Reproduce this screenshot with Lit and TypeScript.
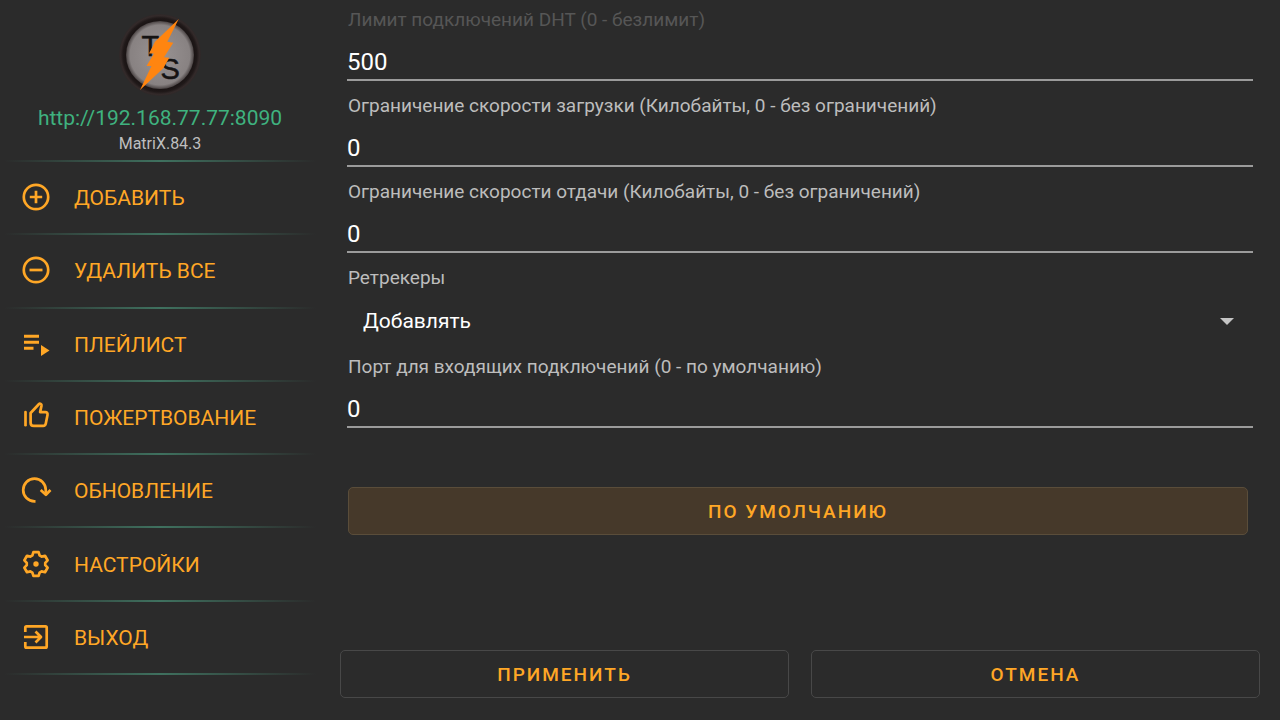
import { LitElement, html, css, svg } from "lit";
import { customElement } from "lit/decorators.js";

const icons = {
  add: svg`<circle cx="14" cy="14" r="12.2"/><path d="M14 7.800v12.400M7.800 14h12.400"/>`,
  remove: svg`<circle cx="14" cy="14" r="12.2"/><path d="M7.500 14h13"/>`,
  playlist: svg`<path class="thick" d="M2 6.200h15M2 12.200h15M2 18.200h9.500"/><path class="solid" d="M19 15v11l8.500-5.500z"/>`,
  like: svg`<path d="M3.500 9v13.200" stroke-linecap="round"/><path d="M8.600 10l8.200-8.700c1.200-1.200 3-.2 2.700 1.400l-1.400 6.400h5.200c1.700 0 2.500 1.200 2.200 2.800l-1.700 8.700c-.3 1.500-1.200 2.300-2.600 2.300h-9.400c-2.100 0-3.200-1.200-3.200-3.200z"/>`,
  refresh: svg`<path d="M13.500 25.300h-1A11.300 11.300 0 1 1 23.800 14v4"/><path d="M18.700 14l5.200 4.800 4.600-4.800"/>`,
  settings: svg`<path d="M10.400 5.400l1-3.300h5.200l1 3.300 2.050 1.180 3.360-.78 2.600 4.500-2.360 2.520v2.360l2.360 2.520-2.600 4.500-3.360-.78-2.050 1.180-1 3.300h-5.200l-1-3.300-2.050-1.180-3.360.78-2.600-4.500 2.360-2.520v-2.360L2.390 10.300l2.600-4.500 3.360.78z"/><circle class="solid" cx="14" cy="14" r="2.700"/>`,
  exit: svg`<path d="M3.300 9V4.500c0-.8.400-1.200 1.200-1.200h19c.8 0 1.200.4 1.200 1.200v19c0 .8-.4 1.200-1.200 1.200h-19c-.8 0-1.200-.4-1.200-1.200V19M2 14h16M13.500 8.500l5.500 5.500-5.500 5.500"/>`,
};

const menu: [keyof typeof icons, string][] = [
  ["add", "ДОБАВИТЬ"],
  ["remove", "УДАЛИТЬ ВСЕ"],
  ["playlist", "ПЛЕЙЛИСТ"],
  ["like", "ПОЖЕРТВОВАНИЕ"],
  ["refresh", "ОБНОВЛЕНИЕ"],
  ["settings", "НАСТРОЙКИ"],
  ["exit", "ВЫХОД"],
];

@customElement("app-root")
export class AppRoot extends LitElement {
  static styles = css`
    :host {
      display: flex;
      min-height: 100vh;
      background: #2b2b2b;
      color: #fff;
      font-family: Roboto, "Noto Sans", sans-serif;
    }
    * { box-sizing: border-box; }
    button, input, select { font: inherit; color: inherit; margin: 0; }
    .sidebar {
      flex: 0 0 25%;
      display: flex;
      flex-direction: column;
      padding: 14px 4px 45px;
    }
    .brand, .item {
      background: linear-gradient(90deg, transparent, #3f715f 50%, transparent) bottom / 100% 2px no-repeat;
    }
    .brand {
      display: flex;
      flex-direction: column;
      align-items: center;
      padding-bottom: 7px;
    }
    .logo { width: 82px; height: 82px; display: block; }
    .address {
      margin-top: 8px;
      font-size: 21px;
      line-height: 28px;
      color: #3fb27f;
      text-decoration: none;
    }
    .version { font-size: 16px; line-height: 23px; color: #bfbfbf; }
    .menu { flex: 1; display: flex; flex-direction: column; }
    .item {
      flex: 1;
      display: flex;
      align-items: center;
      gap: 24px;
      padding: 0 18px 3px;
      border: 0;
      color: #ffa726;
      font-size: 21px;
      line-height: 28px;
      text-align: left;
    }
    .icon {
      width: 28px;
      height: 28px;
      flex: none;
      overflow: visible;
      fill: none;
      stroke: currentColor;
      stroke-width: 2.7;
      stroke-linejoin: round;
    }
    .thick { stroke-width: 3; }
    .solid { fill: currentColor; stroke: none; }
    .caption { padding-top: 2px; }
    .content {
      flex: 1;
      min-width: 0;
      display: flex;
      flex-direction: column;
      padding: 6px 20px 22px;
    }
    .form { padding: 0 7px; }
    .field { display: flex; flex-direction: column; height: 86px; }
    .label { padding-left: 1px; font-size: 19px; line-height: 27px; color: #bdbdbd; }
    .faded { color: #565656; }
    .input {
      height: 48px;
      width: 100%;
      padding: 12px 0 0;
      border: 0;
      border-bottom: 2px solid #9b9b9b;
      border-radius: 0;
      outline: 0;
      background: none;
      font-size: 24px;
      line-height: 28px;
    }
    .choice { height: 89px; }
    .select {
      appearance: none;
      height: 60px;
      padding: 0 16px;
      border: 0;
      outline: 0;
      background: none;
      font-size: 21px;
      line-height: 28px;
    }
    .select-box { display: grid; align-items: center; }
    .select-box > * { grid-area: 1 / 1; }
    .arrow { justify-self: end; width: 14px; height: 7px; margin-right: 19px; fill: #c4c4c4; pointer-events: none; }
    .button {
      height: 48px;
      padding: 2px 16px 0;
      border: 1px solid #484848;
      border-radius: 5px;
      background: none;
      color: #ffa726;
      font-size: 19px;
      line-height: 24px;
      font-weight: 500;
      letter-spacing: 2px;
    }
    .reset { margin: 48px 12px 0 8px; border-color: #5a4d3a; background: #46392a; }
    .actions { display: grid; grid-template-columns: 1fr 1fr; gap: 22px; margin-top: auto; }
    .letter { font: 29px "Liberation Sans", Arial, sans-serif; fill: #151313; stroke: #151313; stroke-width: .5; }
  `;

  private field(id: string, label: string, value: string, faded = false) {
    return html`<div class="field">
      <label class="label ${faded ? "faded" : ""}" for=${id}>${label}</label>
      <input class="input" id=${id} inputmode="numeric" .value=${value} />
    </div>`;
  }

  render() {
    return html`
      <aside class="sidebar">
        <div class="brand">
          <svg class="logo" viewBox="0 0 82 82" role="img" aria-label="TS">
            <defs>
              <radialGradient id="rim"><stop offset=".8" stop-color="#171111" /><stop offset=".9" stop-color="#201919" /><stop offset=".96" stop-color="#332a2a" /><stop offset="1" stop-color="#2e2828" /></radialGradient>
              <radialGradient id="face"><stop offset="0" stop-color="#999393" /><stop offset=".88" stop-color="#888282" /><stop offset="1" stop-color="#4a4343" /></radialGradient>
            </defs>
            <circle cx="41" cy="41" r="41" fill="url(#rim)" />
            <circle cx="41" cy="41" r="34" fill="url(#face)" />
            <text class="letter" x="22.500" y="42">T</text>
            <text class="letter" x="41.500" y="64.500">S</text>
            <path fill="#ff8510" d="M59.700 5L36 27.700 30 39.500h5L27.500 52h5L21 76l23.300-21.700 6-10.600-5.300-.4 9.300-14.600-6-1z" />
          </svg>
          <a class="address" href="http://192.168.77.77:8090">http://192.168.77.77:8090</a>
          <div class="version">MatriX.84.3</div>
        </div>
        <nav class="menu">
          ${menu.map(([icon, text]) => html`<button class="item" type="button">
            <svg class="icon" viewBox="0 0 28 28" aria-hidden="true">${icons[icon]}</svg>
            <span class="caption">${text}</span>
          </button>`)}
        </nav>
      </aside>
      <main class="content">
        <div class="form">
          ${this.field("dht", "Лимит подключений DHT (0 - безлимит)", "500", true)}
          ${this.field("down", "Ограничение скорости загрузки (Килобайты, 0 - без ограничений)", "0")}
          ${this.field("up", "Ограничение скорости отдачи (Килобайты, 0 - без ограничений)", "0")}
          <div class="field choice">
            <label class="label" for="retrackers">Ретрекеры</label>
            <div class="select-box">
              <select class="select" id="retrackers"><option>Добавлять</option></select>
              <svg class="arrow" viewBox="0 0 14 7" aria-hidden="true"><path d="M0 0h14L7 7z" /></svg>
            </div>
          </div>
          ${this.field("port", "Порт для входящих подключений (0 - по умолчанию)", "0")}
        </div>
        <button class="button reset" type="button">ПО УМОЛЧАНИЮ</button>
        <div class="actions">
          <button class="button" type="button">ПРИМЕНИТЬ</button>
          <button class="button" type="button">ОТМЕНА</button>
        </div>
      </main>
    `;
  }
}
